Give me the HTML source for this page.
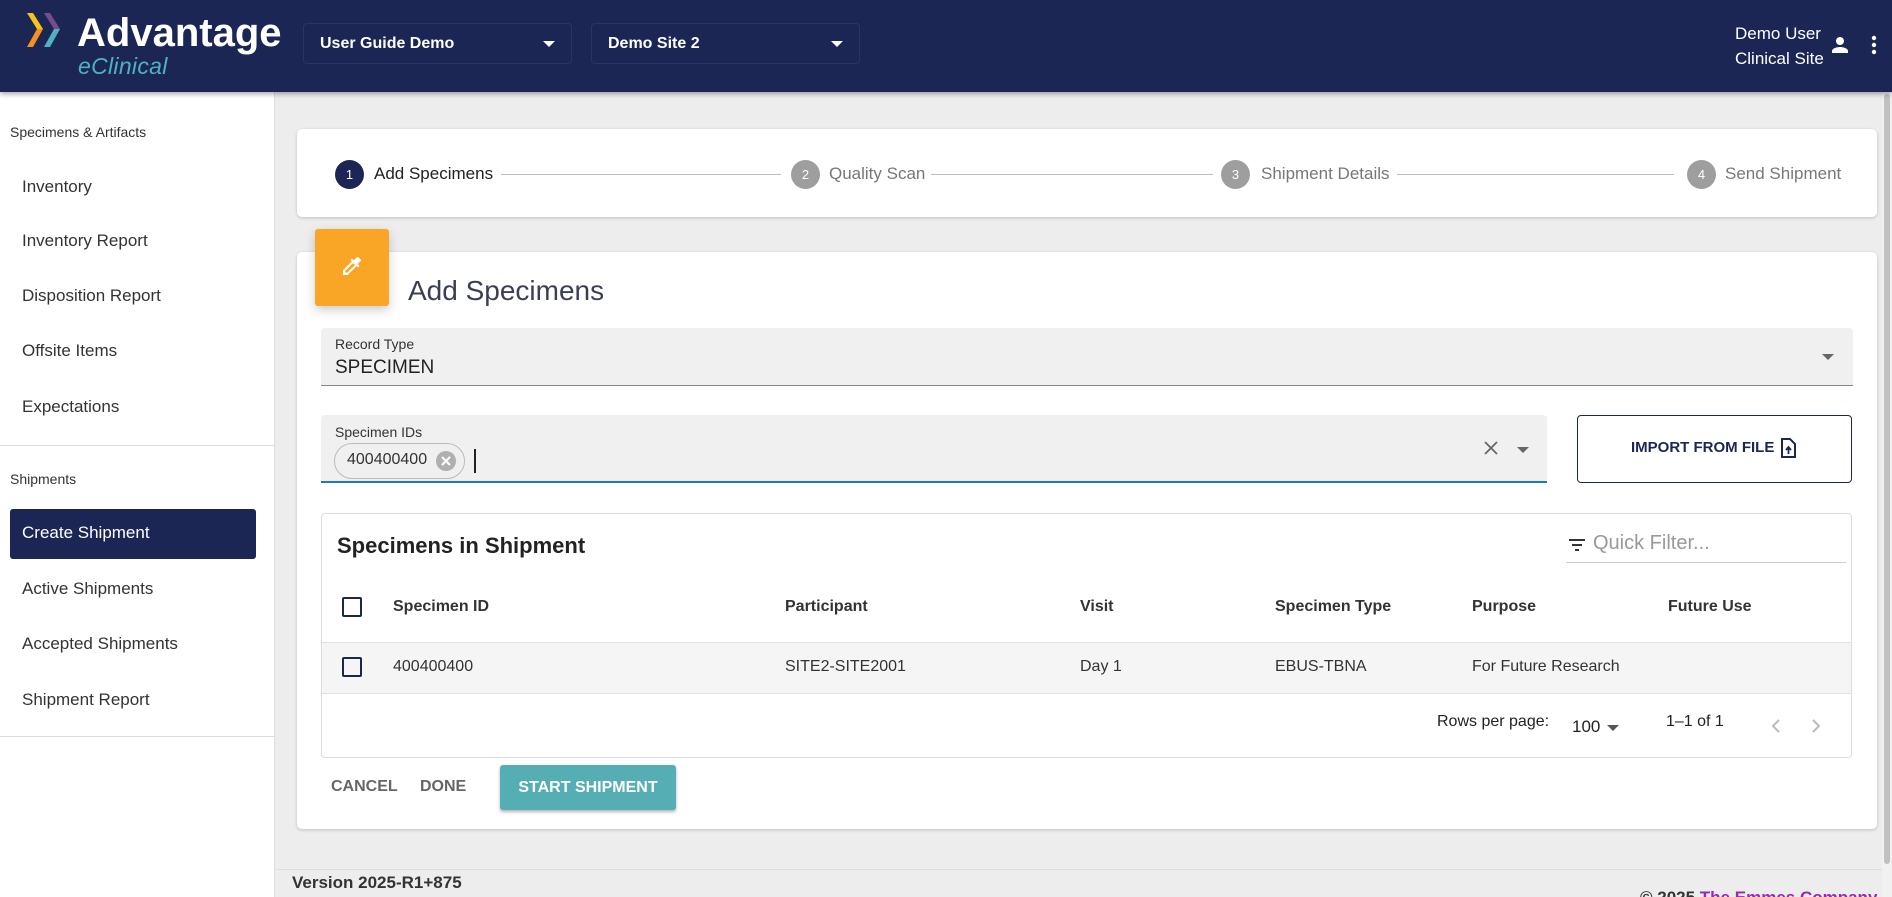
<!DOCTYPE html>
<html style="overflow:hidden;height:897px"><head><meta charset="utf-8"><style>
*{box-sizing:border-box;margin:0;padding:0}
body{width:1892px;height:897px;overflow:hidden;background:#ededed;font-family:"Liberation Sans",Arial,sans-serif;position:relative;color:#222}
.a{position:absolute}
.hdr{left:0;top:0;width:1892px;height:92px;background:#1b2655;box-shadow:0 2px 5px rgba(0,0,0,.35);z-index:3}
.dd{height:41px;top:23px;border:1px solid #2a3564;border-radius:4px;background:#1b2655;color:#fff;font-weight:bold;font-size:16px;line-height:39px;padding-left:16px}
.dd:after{content:"";position:absolute;right:16px;top:17px;border:6px solid transparent;border-top:6px solid #fff;border-bottom:none}
.side{left:0;top:92px;width:275px;height:805px;background:#fff;border-right:1px solid #ddd}
.mi{left:22px;font-size:17px;color:#333}
.sec{left:10px;font-size:14px;color:#333}
.card{background:#fff;border-radius:5px;box-shadow:0 1px 3px rgba(0,0,0,.2)}
.circ{width:29px;height:29px;border-radius:50%;background:#9e9e9e;color:#fff;font-size:13px;text-align:center;line-height:29px;top:160px}
.st{top:164px;font-size:17px;color:#777}
.ln{top:174px;height:1px;background:#bdbdbd}
.th{top:598px;font-size:16px;font-weight:bold;color:#333}
.td{top:658px;font-size:16px;color:#333}
.cb{width:20px;height:20px;border:2px solid #1b2655;border-radius:2px;left:342px}
</style></head><body>
<div class="a hdr">
 <svg class="a" style="left:26px;top:12px" width="36" height="36" viewBox="0 0 36 36">
  <polygon points="1,1 7,1 17,17 11,17" fill="#f6c21c"/>
  <polygon points="11,17 17,17 7,35 1,35" fill="#f7901e"/>
  <polygon points="18,1 24,1 34,17 28,17" fill="#7b4a8b"/>
  <polygon points="28,17 34,17 24,35 18,35" fill="#4fb3bf"/>
 </svg>
 <div class="a" style="left:77px;top:10px;color:#fff;font-size:40px;line-height:46px;font-weight:bold;white-space:nowrap">Advantage</div>
 <div class="a" style="left:78px;top:55px;color:#4fb3bf;font-size:23px;line-height:23px;font-style:italic;letter-spacing:0.3px;white-space:nowrap">eClinical</div>
 <div class="a dd" style="left:303px;width:269px">User Guide Demo</div>
 <div class="a dd" style="left:591px;width:269px">Demo Site 2</div>
 <div class="a" style="left:1735px;top:21px;color:#fff;font-size:17px;line-height:25px">Demo User<br>Clinical Site</div>
 <svg class="a" style="left:1828px;top:33px" width="24" height="24" viewBox="0 0 24 24"><path fill="#fff" d="M12 12c2.2 0 4-1.8 4-4s-1.8-4-4-4-4 1.8-4 4 1.8 4 4 4zm0 2c-2.7 0-8 1.3-8 4v2h16v-2c0-2.7-5.3-4-8-4z"/></svg>
 <svg class="a" style="left:1866px;top:33px" width="16" height="24" viewBox="0 0 16 24"><circle cx="8" cy="5" r="2.2" fill="#fff"/><circle cx="8" cy="12" r="2.2" fill="#fff"/><circle cx="8" cy="19" r="2.2" fill="#fff"/></svg>
</div>
<div class="a side"></div>
<div class="a sec" style="top:124px">Specimens &amp; Artifacts</div>
<div class="a mi" style="top:177px">Inventory</div>
<div class="a mi" style="top:231px">Inventory Report</div>
<div class="a mi" style="top:286px">Disposition Report</div>
<div class="a mi" style="top:341px">Offsite Items</div>
<div class="a mi" style="top:397px">Expectations</div>
<div class="a" style="left:0;top:445px;width:275px;height:1px;background:#ddd"></div>
<div class="a sec" style="top:471px">Shipments</div>
<div class="a" style="left:10px;top:509px;width:246px;height:50px;background:#1b2655;border-radius:3px"></div>
<div class="a mi" style="top:523px;color:#fff">Create Shipment</div>
<div class="a mi" style="top:579px">Active Shipments</div>
<div class="a mi" style="top:634px">Accepted Shipments</div>
<div class="a mi" style="top:690px">Shipment Report</div>
<div class="a" style="left:0;top:736px;width:275px;height:1px;background:#ddd"></div>

<div class="a card" style="left:297px;top:129px;width:1580px;height:88px"></div>
<div class="a circ" style="left:335px;background:#1b2655">1</div>
<div class="a st" style="left:374px;color:#222">Add Specimens</div>
<div class="a ln" style="left:501px;width:280px"></div>
<div class="a circ" style="left:791px">2</div>
<div class="a st" style="left:829px">Quality Scan</div>
<div class="a ln" style="left:931px;width:282px"></div>
<div class="a circ" style="left:1221px">3</div>
<div class="a st" style="left:1261px">Shipment Details</div>
<div class="a ln" style="left:1397px;width:277px"></div>
<div class="a circ" style="left:1687px">4</div>
<div class="a st" style="left:1725px">Send Shipment</div>

<div class="a card" style="left:297px;top:252px;width:1580px;height:577px"></div>
<div class="a" style="left:315px;top:229px;width:74px;height:77px;background:#f9a525;border-radius:3px;box-shadow:0 4px 10px rgba(0,0,0,.2)"></div>
<svg class="a" style="left:340px;top:254px" width="24" height="24" viewBox="0 0 24 24"><path fill="#fff" d="M20.7 5.6l-2.3-2.3c-.4-.4-1-.4-1.4 0l-3.1 3.1-1.9-1.9-1.4 1.4 1.4 1.4L3 16.3V21h4.7l9-9 1.4 1.4 1.4-1.4-1.9-1.9 3.1-3.1c.4-.4.4-1 0-1.4zM6.9 19L5 17.1l8.1-8.1 1.9 1.9L6.9 19z"/></svg>
<div class="a" style="left:408px;top:275px;font-size:28px;color:#3a3f55;font-weight:300">Add Specimens</div>

<div class="a" style="left:321px;top:328px;width:1532px;height:58px;background:#f0f0f0;border-bottom:1px solid #888;border-radius:4px 4px 0 0"></div>
<div class="a" style="left:335px;top:336px;font-size:14px;color:#333">Record Type</div>
<div class="a" style="left:335px;top:357px;font-size:19px;color:#222">SPECIMEN</div>
<div class="a" style="left:1822px;top:354px;border:6px solid transparent;border-top:6px solid #666;border-bottom:none"></div>

<div class="a" style="left:321px;top:415px;width:1226px;height:68px;background:#f0f0f0;border-bottom:2px solid #1976d2;border-radius:4px 4px 0 0"></div>
<div class="a" style="left:335px;top:424px;font-size:14px;color:#333">Specimen IDs</div>
<div class="a" style="left:334px;top:443px;width:131px;height:36px;border:1px solid #bbb;border-radius:18px"></div>
<div class="a" style="left:347px;top:451px;font-size:16px;color:#333">400400400</div>
<svg class="a" style="left:435px;top:450px" width="22" height="22" viewBox="0 0 22 22"><circle cx="11" cy="11" r="10" fill="#b0b0b0"/><path d="M7 7l8 8M15 7l-8 8" stroke="#fff" stroke-width="2.2"/></svg>
<div class="a" style="left:474px;top:449px;width:1.5px;height:24px;background:#222"></div>
<svg class="a" style="left:1481px;top:438px" width="20" height="20" viewBox="0 0 20 20"><path d="M4 4l12 12M16 4L4 16" stroke="#666" stroke-width="1.8"/></svg>
<div class="a" style="left:1517px;top:447px;border:6px solid transparent;border-top:6px solid #666;border-bottom:none"></div>

<div class="a" style="left:1577px;top:415px;width:275px;height:68px;border:1.5px solid #1b2655;border-radius:4px"></div>
<div class="a" style="left:1631px;top:439px;font-size:15px;font-weight:bold;color:#1b2655">IMPORT FROM FILE</div>
<svg class="a" style="left:1779px;top:437px" width="18" height="22" viewBox="0 0 18 22"><path d="M3 2h8l5 5v13H3z" fill="none" stroke="#1b2655" stroke-width="2"/><path d="M9.5 17v-6M7 13l2.5-3 2.5 3" stroke="#1b2655" stroke-width="1.8" fill="none"/></svg>

<div class="a" style="left:321px;top:513px;width:1531px;height:245px;border:1px solid #ddd;border-radius:4px;background:#fff"></div>
<div class="a" style="left:337px;top:533px;font-size:22px;font-weight:bold;color:#222">Specimens in Shipment</div>
<svg class="a" style="left:1566px;top:534px" width="22" height="22" viewBox="0 0 22 22"><path d="M3 6h16M6 11h10M9 16h4" stroke="#333" stroke-width="2"/></svg>
<div class="a" style="left:1593px;top:532px;font-size:20px;color:#999">Quick Filter...</div>
<div class="a" style="left:1566px;top:562px;width:280px;height:1px;background:#ccc"></div>
<div class="a cb" style="top:597px"></div>
<div class="a th" style="left:393px">Specimen ID</div>
<div class="a th" style="left:785px">Participant</div>
<div class="a th" style="left:1080px">Visit</div>
<div class="a th" style="left:1275px">Specimen Type</div>
<div class="a th" style="left:1472px">Purpose</div>
<div class="a th" style="left:1668px">Future Use</div>
<div class="a" style="left:322px;top:642px;width:1529px;height:52px;background:#f5f5f5;border-top:1px solid #e0e0e0;border-bottom:1px solid #e0e0e0"></div>
<div class="a cb" style="top:657px"></div>
<div class="a td" style="left:393px">400400400</div>
<div class="a td" style="left:785px">SITE2-SITE2001</div>
<div class="a td" style="left:1080px">Day 1</div>
<div class="a td" style="left:1275px">EBUS-TBNA</div>
<div class="a td" style="left:1472px">For Future Research</div>
<div class="a" style="left:1437px;top:713px;font-size:16px;color:#222">Rows per page:</div>
<div class="a" style="left:1572px;top:717px;font-size:17px;color:#222">100</div>
<div class="a" style="left:1607px;top:725px;border:6px solid transparent;border-top:6px solid #555;border-bottom:none"></div>
<div class="a" style="left:1666px;top:713px;font-size:16px;color:#222">1–1 of 1</div>
<svg class="a" style="left:1766px;top:715px" width="60" height="22" viewBox="0 0 60 22"><path d="M13 5l-6 6 6 6M47 5l6 6-6 6" stroke="#bbb" stroke-width="2" fill="none"/></svg>

<div class="a" style="left:331px;top:778px;font-size:16px;font-weight:bold;color:#666">CANCEL</div>
<div class="a" style="left:420px;top:778px;font-size:16px;font-weight:bold;color:#666">DONE</div>
<div class="a" style="left:500px;top:765px;width:176px;height:45px;background:#56aeb5;border-radius:3px;box-shadow:0 2px 3px rgba(0,0,0,.3);color:#fff;font-size:16px;font-weight:bold;text-align:center;line-height:45px">START SHIPMENT</div>

<div class="a" style="left:276px;top:869px;width:1616px;height:1px;background:#ddd"></div>
<div class="a" style="left:292px;top:873px;font-size:17px;font-weight:bold;color:#333">Version 2025-R1+875</div>
<div class="a" style="left:1640px;top:888px;font-size:17px;line-height:20px;font-weight:bold;color:#333;white-space:nowrap">© 2025 <span style="color:#9c27b0">The Emmes Company</span></div>
<div class="a" style="left:1882px;top:92px;width:10px;height:805px;background:#f1f1f1"></div>
<div class="a" style="left:1884px;top:94px;width:6px;height:770px;background:#c1c1c1;border-radius:3px"></div>
</body></html>
